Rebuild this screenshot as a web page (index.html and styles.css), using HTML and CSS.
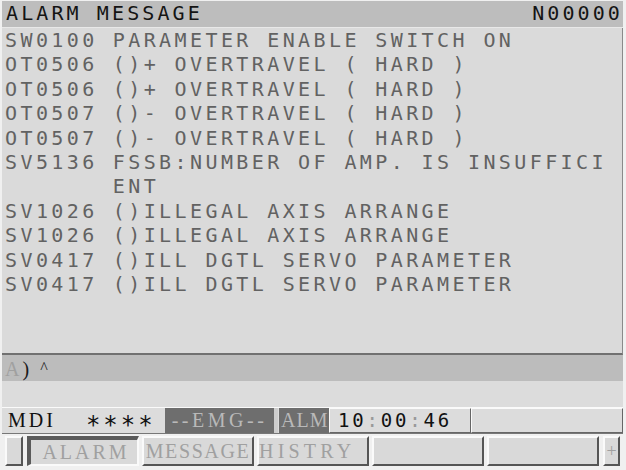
FILE: index.html
```html
<!DOCTYPE html>
<html lang="en">
<head>
    <meta charset="UTF-8">
    <title>Alarm Message</title>
    <link rel="stylesheet" href="styles.css">
</head>
<body>
    <div class="screen">
        <div class="title-bar">
            <span>ALARM MESSAGE</span>
            <span>N00000</span>
        </div>

        <div class="alarm-list">
            <div class="alarm"><span class="code">SW0100</span><span class="msg">PARAMETER ENABLE SWITCH ON</span></div>
            <div class="alarm"><span class="code">OT0506</span><span class="msg">()+ OVERTRAVEL ( HARD )</span></div>
            <div class="alarm"><span class="code">OT0506</span><span class="msg">()+ OVERTRAVEL ( HARD )</span></div>
            <div class="alarm"><span class="code">OT0507</span><span class="msg">()- OVERTRAVEL ( HARD )</span></div>
            <div class="alarm"><span class="code">OT0507</span><span class="msg">()- OVERTRAVEL ( HARD )</span></div>
            <div class="alarm"><span class="code">SV5136</span><span class="msg">FSSB:NUMBER OF AMP. IS INSUFFICIENT</span></div>
            <div class="alarm"><span class="code">SV1026</span><span class="msg">()ILLEGAL AXIS ARRANGE</span></div>
            <div class="alarm"><span class="code">SV1026</span><span class="msg">()ILLEGAL AXIS ARRANGE</span></div>
            <div class="alarm"><span class="code">SV0417</span><span class="msg">()ILL DGTL SERVO PARAMETER</span></div>
            <div class="alarm"><span class="code">SV0417</span><span class="msg">()ILL DGTL SERVO PARAMETER</span></div>
        </div>

        <div class="input-line"><span class="prompt">A</span>) <span class="caret">^</span></div>
        <div class="key-buffer"></div>

        <div class="status-bar">
            <div class="mode"><span class="mode-name">MDI</span><span class="stars">****</span></div>
            <div class="emg">--EMG--</div>
            <div class="alm">ALM</div>
            <div class="clock">10<span class="colon">:</span>00<span class="colon">:</span>46</div>
            <div class="blank"></div>
        </div>

        <div class="softkeys">
            <div class="key key-small"></div>
            <div class="key active">ALARM</div>
            <div class="key key-wide">MESSAGE</div>
            <div class="key key-left">HISTRY</div>
            <div class="key"></div>
            <div class="key"></div>
            <div class="key key-plus">+</div>
        </div>
    </div>
</body>
</html>
```

FILE: styles.css
```css
* {
    margin: 0;
    padding: 0;
    box-sizing: border-box;
}

body {
    background: #f0f0f0;
    font-family: 'DejaVu Sans Mono', monospace;
    font-variant-numeric: slashed-zero;
}

.screen {
    width: 623px;
    padding: 1px 0 0 2px;
}

.title-bar {
    display: flex;
    justify-content: space-between;
    height: 27px;
    padding-left: 4px;
    background: #bdbdbd;
    border-bottom: 1px solid #e8e8e8;
    color: #141414;
    font-size: 20px;
    line-height: 24px;
    letter-spacing: 3.1px;
}

.alarm-list {
    height: 327px;
    padding-left: 3px;
    background: #dadada;
    border-right: 1px solid #8a8a8a;
    border-bottom: 2px solid #707070;
    color: #626262;
    font-size: 20px;
    line-height: 24.4px;
    letter-spacing: 3.4px;
}

.alarm {
    display: flex;
}

.code {
    width: 107.8px;
    flex-shrink: 0;
}

.msg {
    width: 498px;
    word-break: break-all;
}

.input-line {
    height: 26px;
    padding-left: 3px;
    background: #bcbcbc;
    color: #1a1a1a;
    font-family: 'Liberation Serif', serif;
    font-size: 20px;
    line-height: 26px;
    letter-spacing: 3px;
}

.prompt {
    color: #a0a0a0;
}

.caret {
    font-size: 16px;
    vertical-align: 3px;
}

.key-buffer {
    height: 26px;
    background: #dcdcdc;
}

.status-bar {
    display: flex;
    height: 27px;
    background: #dcdcdc;
    border-top: 1px solid #fafafa;
    border-bottom: 1px solid #777;
    font-family: 'Liberation Serif', serif;
    font-size: 20px;
    line-height: 25px;
}

.mode {
    width: 163px;
    padding-left: 6px;
    color: #111;
}

.mode-name {
    letter-spacing: 3px;
}

.stars {
    margin-left: 30px;
    font-family: 'DejaVu Sans Mono', monospace;
    font-size: 24px;
    letter-spacing: 3px;
    vertical-align: -6px;
}

.emg {
    width: 113px;
    background: #6e6e6e;
    border-right: 4px solid #cdcdcd;
    color: #b9b9b9;
    text-align: center;
    letter-spacing: 3.5px;
}

.alm {
    width: 50px;
    margin-left: 1px;
    padding-left: 2px;
    background: #6e6e6e;
    color: #b9b9b9;
    letter-spacing: 1px;
    white-space: nowrap;
    overflow: hidden;
}

.clock {
    width: 142px;
    padding-left: 8px;
    border-top: 1px solid #fafafa;
    border-left: 1px solid #fafafa;
    border-right: 1px solid #666;
    border-bottom: 1px solid #666;
    color: #111;
    font-family: 'DejaVu Sans Mono', monospace;
    font-size: 19px;
    letter-spacing: 2.8px;
    line-height: 23px;
}

.colon {
    color: #999;
}

.blank {
    flex: 1;
    border-top: 1px solid #fafafa;
    border-left: 1px solid #fafafa;
    border-right: 1px solid #666;
    border-bottom: 1px solid #666;
}

.softkeys {
    display: flex;
    gap: 3px;
    height: 35px;
    padding: 2px 0 3px 3px;
}

.key {
    width: 112px;
    background: #d9d9d9;
    border-top: 2px solid #fafafa;
    border-left: 2px solid #fafafa;
    border-right: 2px solid #555;
    border-bottom: 2px solid #555;
    color: #a0a0a0;
    font-family: 'Liberation Serif', serif;
    font-size: 20px;
    line-height: 26px;
    letter-spacing: 2.4px;
    text-align: center;
}

.key-small {
    width: 18px;
    margin-right: 1px;
}

.key.active {
    border-top: 4px solid #5a5a5a;
    border-left: 4px solid #5a5a5a;
    border-right: 2px solid #fafafa;
    border-bottom: 2px solid #fafafa;
    line-height: 24px;
    padding-left: 4px;
    letter-spacing: 3px;
}

.key-wide {
    letter-spacing: 1.6px;
}

.key-left {
    padding-left: 0;
    text-align: left;
    letter-spacing: 4.2px;
}

.key-plus {
    width: 17px;
    margin-left: 1px;
    letter-spacing: 0;
    font-size: 18px;
}
```
